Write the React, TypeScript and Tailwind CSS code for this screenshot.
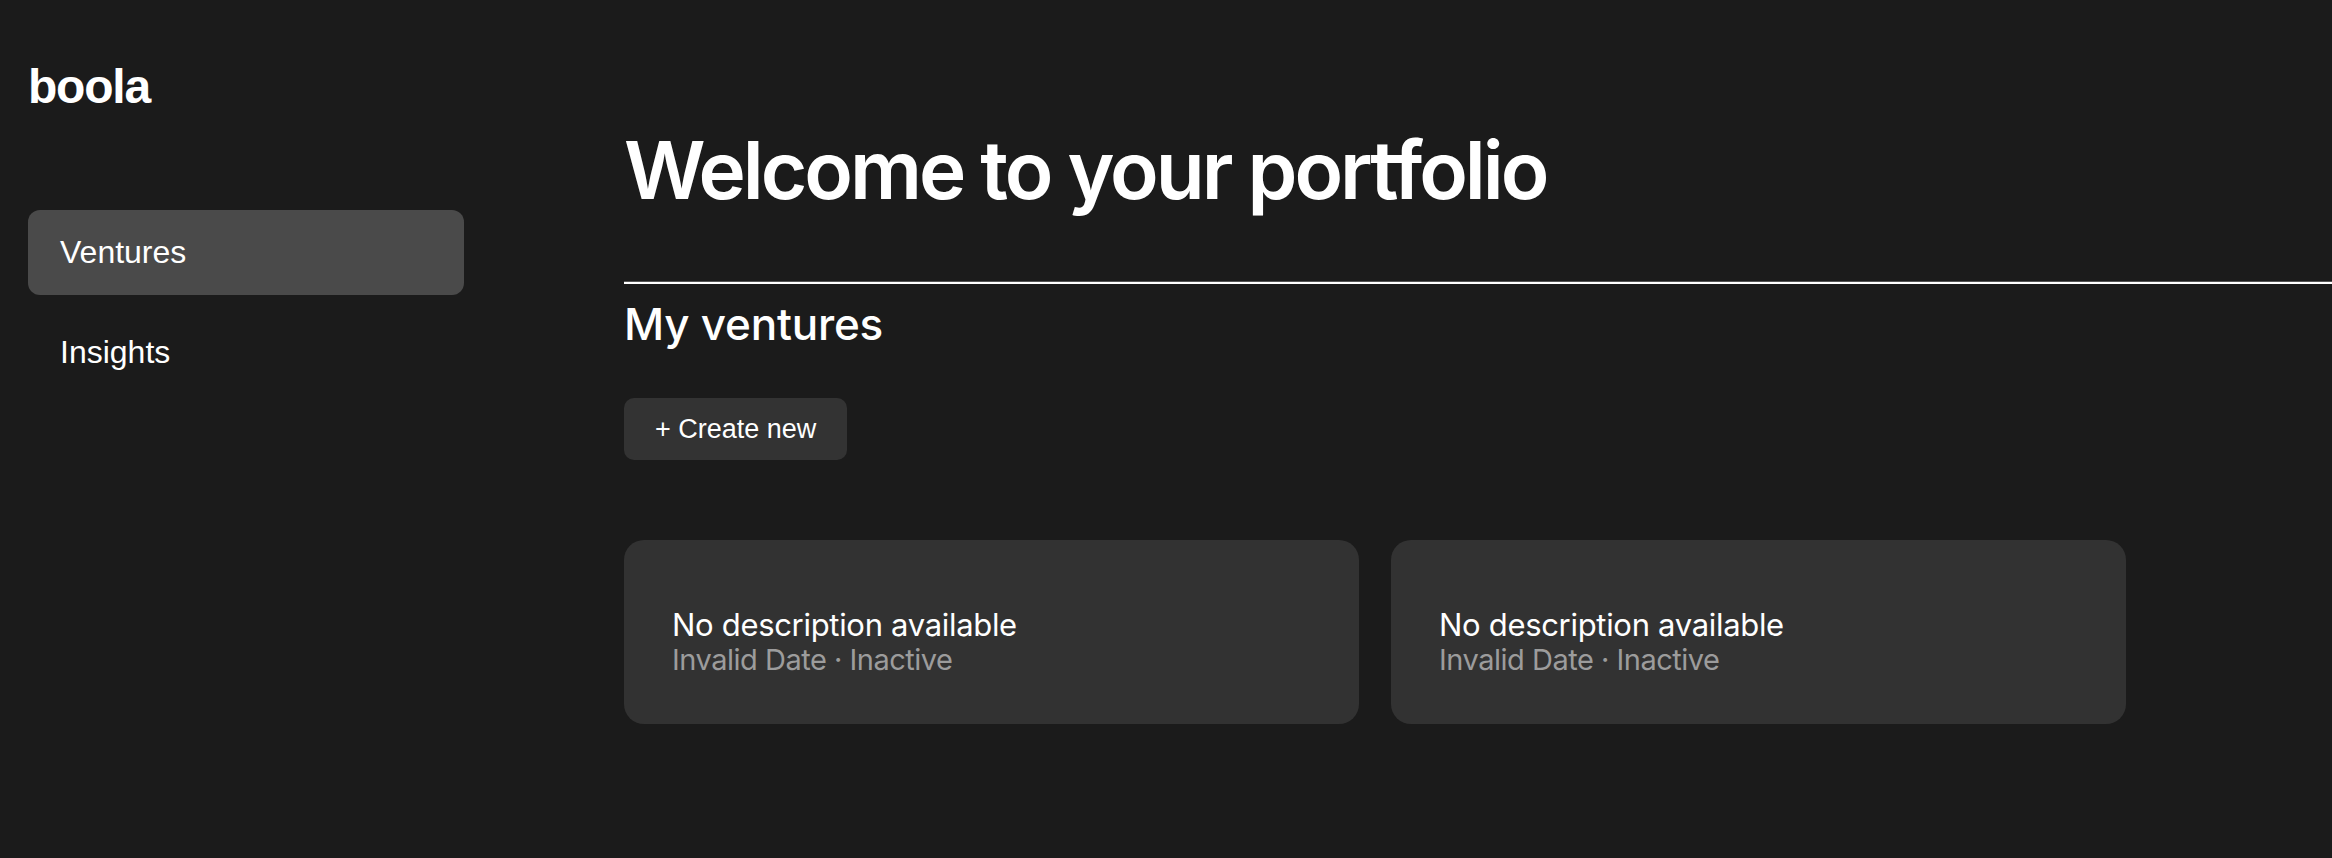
import React from "react";

function Card() {
  return (
    <div className="w-[735px] h-[184px] rounded-[20px] bg-[#323232] px-[48px] pt-[66px] flex flex-col font-['Inter',sans-serif]">
      <div className="text-[31px] leading-[37px] text-white tracking-[-0.01em]">No description available</div>
      <div className="text-[29px] leading-[34px] text-[#9c9c9c] tracking-[-0.017em]">Invalid Date · Inactive</div>
    </div>
  );
}

export default function App() {
  return (
    <div className="min-h-screen w-full bg-[#1b1b1b] text-white flex">
      <aside className="w-[492px] shrink-0 px-[28px] pt-[59px] font-['Liberation_Sans',Arial,sans-serif]">
        <div className="text-[48px] leading-[56px] font-bold tracking-[-0.025em]">boola</div>
        <nav className="mt-[95px] flex flex-col gap-[15px]">
          <div className="h-[85px] rounded-[12px] bg-[#4a4a4a] px-[32px] flex items-center text-[32px] leading-[36px] pb-px">Ventures</div>
          <div className="h-[85px] rounded-[12px] px-[32px] flex items-center text-[32px] leading-[36px] pb-px">Insights</div>
        </nav>
      </aside>
      <main className="flex-1 pl-[132px] pt-[130px] flex flex-col">
        <h1 className="font-['Inter',sans-serif] text-[80px] leading-[80px] font-semibold tracking-[-0.038em]">Welcome to your portfolio</h1>
        <div className="mt-[71px] flex flex-col">
          <div className="h-px bg-[#555555]" />
          <div className="h-[2px] bg-white" />
        </div>
        <h2 className="mt-[18px] font-['Inter',sans-serif] text-[44px] leading-[44px] font-medium tracking-[-0.005em]">My ventures</h2>
        <div className="mt-[52px]">
          <button className="h-[62px] px-[31px] rounded-[10px] bg-[#333333] text-white text-[27px] font-['Liberation_Sans',Arial,sans-serif]">+ Create new</button>
        </div>
        <div className="mt-[80px] flex gap-[32px]">
          <Card />
          <Card />
        </div>
      </main>
    </div>
  );
}
